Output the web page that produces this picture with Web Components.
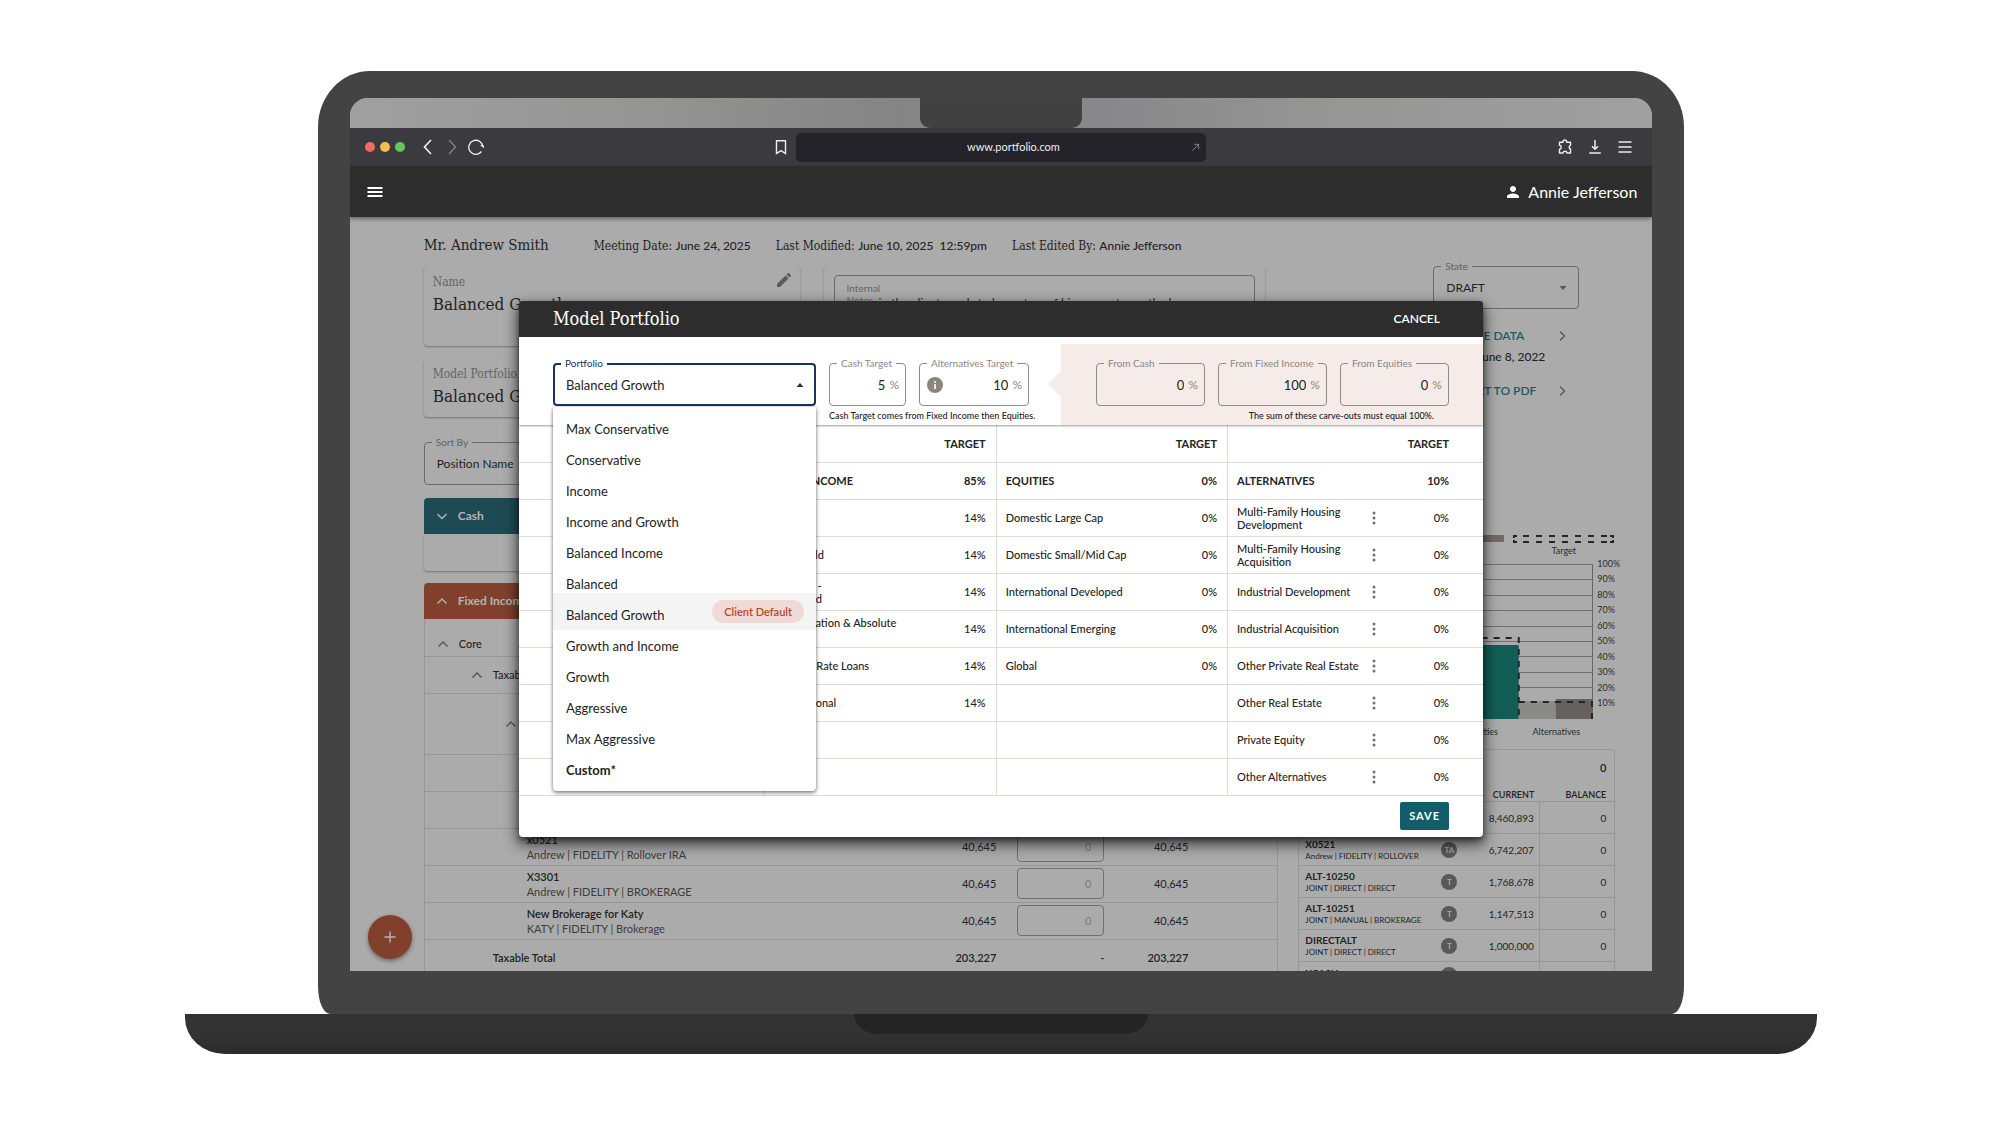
<!DOCTYPE html>
<html lang="en">
<head>
<meta charset="utf-8">
<title>Model Portfolio</title>
<style>
  :root {
    --slab: "DejaVu Serif Condensed", "Liberation Serif", serif;
    --ink: #232323;
    --muted: #666462;
    --line: #979695;
    --page: #ababab;
  }
  body { margin: 0; background: #fff; color: var(--ink); font: 12px/16px Lato, "Liberation Sans", sans-serif; }
</style>
</head>
<body>
<laptop-frame>
  <browser-bar></browser-bar>
  <app-header user="Annie Jefferson"></app-header>
  <plan-page></plan-page>
  <portfolio-modal slot="overlay"></portfolio-modal>
</laptop-frame>

<script>
const RESET = `:host,*,::before{box-sizing:border-box}button,input,select{font:inherit;color:inherit;background:none;border:0;padding:0;margin:0;border-radius:0;appearance:none;outline:0;min-width:0}button{display:flex;align-items:center;text-align:inherit}table{border-collapse:collapse;table-layout:fixed;width:100%}th,td{padding:0;text-align:left;font-weight:inherit}h1,h2,p,ul{margin:0;padding:0;font-weight:400;list-style:none}`;

function define(name, render) {
  customElements.define(name, class extends HTMLElement {
    connectedCallback() {
      if (this.shadowRoot) return;
      const t = document.createElement('template');
      t.innerHTML = `<style>${RESET}</style>` + render(this);
      this.attachShadow({ mode: 'open' }).append(t.content.cloneNode(true));
    }
  });
}

const ICONS = {
  back: ['0 0 16 16', '<path d="M11 1 4.500 8l6.500 7" fill="none" stroke="currentColor" stroke-width="1.700"/>'],
  forward: ['0 0 16 16', '<path d="M5 1l6.500 7L5 15" fill="none" stroke="currentColor" stroke-width="1.300"/>'],
  reload: ['0 0 16 16', '<path d="M13.400 12.500A7 7 0 1 1 14.800 8" fill="none" stroke="currentColor" stroke-width="1.300"/><path d="M12 6.200h3.800v3z" fill="currentColor"/>'],
  bookmark: ['0 0 16 16', '<path d="M3.500 1.700h9v12.800L8 11.600l-4.500 2.900z" fill="none" stroke="currentColor" stroke-width="1.400"/>'],
  open: ['0 0 10 10', '<path d="M1.500 8.500l7-7M3.500 1.500h5v5" fill="none" stroke="currentColor"/>'],
  puzzle: ['0 0 18 18', '<path d="M2.800 3.600h4c-.6-3.400 4.600-3.400 4 0h4.400v3.500c-2 .6-2 3.600 0 4.200v4.500h-4c-.2-2.700-4.200-2.700-4.400 0h-4v-4.300c2.600-.2 2.600-4.200 0-4.400z" fill="none" stroke="currentColor" stroke-width="1.600" stroke-linejoin="round"/>'],
  download: ['0 0 16 16', '<path d="M8 1v9M5 7.300l3 3 3-3M2.200 14h11.600" fill="none" stroke="currentColor" stroke-width="1.500"/>'],
  lines: ['0 0 16 16', '<path d="M1.500 3h13M1.500 8h13M1.500 13h13" stroke="currentColor" stroke-width="1.300"/>'],
  menu: ['0 0 16 16', '<path d="M.5 4h15M.5 8h15M.5 12h15" stroke="currentColor" stroke-width="1.900"/>'],
  person: ['4 4 16 16', '<path d="M12 12c2.210 0 4-1.790 4-4s-1.790-4-4-4-4 1.790-4 4 1.790 4 4 4zm0 2c-2.670 0-8 1.340-8 4v2h16v-2c0-2.660-5.330-4-8-4z" fill="currentColor"/>'],
  pencil: ['3 3 18 18', '<path d="M3 17.250V21h3.750L17.810 9.940l-3.750-3.750zM20.710 7.040a1 1 0 0 0 0-1.410l-2.340-2.340a1 1 0 0 0-1.410 0l-1.830 1.830 3.750 3.750z" fill="currentColor"/>'],
  up: ['0 0 12 12', '<path d="M1.500 8.500 6 4l4.500 4.500" fill="none" stroke="currentColor" stroke-width="1.400"/>'],
  down: ['0 0 12 12', '<path d="M1.500 4 6 8.500 10.500 4" fill="none" stroke="currentColor" stroke-width="1.400"/>'],
  right: ['0 0 12 12', '<path d="M4 1.500 8.500 6 4 10.500" fill="none" stroke="currentColor" stroke-width="1.300"/>'],
  caretDown: ['0 0 8 8', '<path d="M.5 2h7L4 6z" fill="currentColor"/>'],
  caretUp: ['0 0 8 8', '<path d="M.5 6h7L4 2z" fill="currentColor"/>'],
  info: ['0 0 16 16', '<circle cx="8" cy="8" r="8" fill="currentColor"/><path d="M8 7v5M8 4v1.700" stroke="#fff" stroke-width="1.600"/>'],
  dots: ['0 0 14 14', '<g fill="currentColor"><circle cx="7" cy="2" r="1.500"/><circle cx="7" cy="7" r="1.500"/><circle cx="7" cy="12" r="1.500"/></g>'],
  plus: ['0 0 12 12', '<path d="M6 .5v11M.5 6h11" stroke="currentColor" stroke-width="1.400"/>'],
};
define('app-icon', el => {
  const [box, art] = ICONS[el.getAttribute('name')];
  return `<style>:host{display:block;flex:none;width:var(--size,16px);height:var(--size,16px)}svg{display:block;width:100%;height:100%}</style>
  <svg viewBox="${box}" aria-hidden="true">${art}</svg>`;
});
const icon = (name, size = 16) => `<app-icon name="${name}" style="--size:${size}px"></app-icon>`;

/* Laptop body: lid, camera notch, clipped screen and base */
define('laptop-frame', () => `
<style>
  :host{display:flex;flex-direction:column;align-items:center;height:100vh;min-height:900px;padding:71px 0 71px 2px}
  .lid{width:68.4%;flex:1;min-height:0;background:#434343;border-radius:52px 52px 12px 12px / 56px 56px 28px 28px;padding:27px 32px 43px;display:flex}
  .screen{position:relative;flex:1;min-width:0;display:flex;flex-direction:column;overflow:hidden;border-radius:18px 18px 0 0;background:var(--page)}
  .strip{height:30px;flex:none;display:flex;justify-content:center;background:linear-gradient(90deg,#a0a0a1,#959594 22%,#848484 42%,#88888a 58%,#969695 76%,#a0a0a1)}
  .notch{width:162px;background:#414141;border-radius:0 0 10px 10px}
  .base{width:81.7%;height:40px;flex:none;display:flex;justify-content:center;background:linear-gradient(#333,#333 50%,#2b2b2b);border-radius:0 0 40px 40px / 0 0 36px 36px}
  .grip{width:294px;height:20px;background:#242424;border-radius:0 0 24px 24px / 0 0 20px 20px}
</style>
<div class="lid"><div class="screen"><div class="strip"><div class="notch"></div></div><slot></slot><slot name="overlay"></slot></div></div>
<div class="base"><div class="grip"></div></div>`);

define('browser-bar', () => `
<style>
  :host{display:grid;grid-template-columns:1fr 410px 1fr;align-items:center;height:38px;flex:none;background:#3b3a3f;color:#ededed;padding:0 15px}
  .side{display:flex;align-items:center}
  .lights{display:flex;gap:5px;margin-right:15px}
  i{width:10px;height:10px;border-radius:50%;background:#ee6b5f}i:nth-child(2){background:#f5bd4f}i:nth-child(3){background:#62c655}
  .nav{display:flex;gap:8px;flex:1}.nav button:nth-child(2){color:#858488}
  .mark{margin-right:7px}
  .tools{justify-content:flex-end;gap:14px;padding-right:4px}
  label{display:flex;align-items:center;height:29px;border-radius:5px;background:#242329;padding:0 6px 0 40px}
  input{flex:1;text-align:center;font-size:11px;line-height:16px}
  label app-icon{color:#8b8a8d}
</style>
<div class="side"><div class="lights"><i></i><i></i><i></i></div>
<div class="nav"><button aria-label="Back">${icon('back')}</button><button aria-label="Forward">${icon('forward')}</button><button aria-label="Reload">${icon('reload')}</button></div>
<button class="mark" aria-label="Bookmark">${icon('bookmark')}</button></div>
<label><input aria-label="Address" value="www.portfolio.com">${icon('open', 9)}</label>
<div class="side tools"><button aria-label="Extensions">${icon('puzzle')}</button><button aria-label="Downloads">${icon('download')}</button><button aria-label="Menu">${icon('lines')}</button></div>`);

define('app-header', el => `
<style>
  :host{display:flex;align-items:center;justify-content:space-between;height:51px;flex:none;background:#2d2d2d;color:#fff;padding:0 15px 0 17px;z-index:1;box-shadow:0 2px 4px #0006}
  div{display:flex;align-items:center;gap:9px;font-size:16px;line-height:20px}
</style>
<button aria-label="Open navigation">${icon('menu')}</button><div>${icon('person', 12)}<span>${el.getAttribute('user')}</span></div>`);

/* Text box or drop-down with its label set into the border */
let fieldId = 0;
define('outlined-field', el => {
  const a = n => el.getAttribute(n), id = 'f' + ++fieldId;
  const control = el.hasAttribute('select')
    ? `<select id="${id}"><option>${a('value')}</option></select>${icon(el.hasAttribute('open') ? 'caretUp' : 'caretDown', 8)}`
    : `${el.hasAttribute('info') ? `<span class="info">${icon('info')}</span>` : ''}<input id="${id}" value="${a('value')}"><span class="unit">%</span>`;
  return `
<style>
  :host{display:block;position:relative;--edge:#8e8b88;--fill:#fff}
  .box{display:flex;align-items:center;height:43px;border:1px solid var(--edge);border-radius:4px;padding:0 6px 0 7px;gap:4px;font-size:13px;line-height:18px}
  :host([select]) .box{padding:0 11px 0 12px}
  :host([open]) .box{border:2px solid #17355e;padding:0 10px 0 11px;color:var(--ink)}
  label{position:absolute;top:-7px;left:8px;padding:0 4px;background:var(--fill);color:var(--label,#8b8884);font-size:10px;line-height:14px;white-space:nowrap}
  :host([open]) label,:host([open]) app-icon{color:#17355e}
  :host([dim]){--edge:#6c6b6a;--fill:var(--page);--label:#63615f}
  :host([dim]) .box{font-size:12px}
  input,select{flex:1;width:0}input{text-align:right}
  .unit,.info{color:#8b8580}.unit{font-size:12px}
  :host([dim]) app-icon{color:#555}
</style>
<label for="${id}">${a('label')}</label><div class="box">${control}</div>`;
});

define('portfolio-menu', () => {
  const names = ['Max Conservative', 'Conservative', 'Income', 'Income and Growth', 'Balanced Income', 'Balanced', 'Balanced Growth', 'Growth and Income', 'Growth', 'Aggressive', 'Max Aggressive', 'Custom*'];
  return `
<style>
  :host{display:block;background:#fff;border-radius:0 0 4px 4px;padding:6px 0;box-shadow:0 2px 4px #0007,0 0 3px #0003}
  li{display:flex;align-items:center;justify-content:space-between;padding:0 12px 0 13px}
  button{height:31px;font-size:13px;line-height:18px}
  .on{background:#f4f4f4;margin-top:-6px;height:37px}.on button{align-self:flex-end}
  .chip{background:#efdad5;color:#b5482a;border-radius:12px;padding:0 12px;font-size:11px;line-height:23px;font-weight:600}
  li:last-child{font-weight:700}
</style>
<ul role="listbox" aria-label="Portfolio">${names.map(n => `<li role="option" class="${n === 'Balanced Growth' ? 'on' : ''}"><button>${n}</button>${n === 'Balanced Growth' ? '<span class="chip">Client Default</span>' : ''}</li>`).join('')}</ul>`;
});

define('target-table', () => {
  const fixed = ['Core', 'High Yield', 'Inflation -<br>Protected', 'Low Duration &amp; Absolute<br>Return', 'Floating Rate Loans', 'International', '', ''];
  const eq = ['Domestic Large Cap', 'Domestic Small/Mid Cap', 'International Developed', 'International Emerging', 'Global', '', '', ''];
  const alt = ['Multi-Family Housing Development', 'Multi-Family Housing Acquisition', 'Industrial Development', 'Industrial Acquisition', 'Other Private Real Estate', 'Other Real Estate', 'Private Equity', 'Other Alternatives'];
  const pair = (n, v) => `<td class="n">${n}</td><td class="v">${n ? v : ''}</td>`;
  return `
<style>
  :host{display:block;font-size:11px;line-height:13px;font-weight:500}
  tr{height:37px;border-bottom:1px solid #dedbd7}
  .n{padding-left:9px;border-left:1px solid #dedbd7}
  .wrap{padding-right:20px}
  .n:first-child{border:0}
  .v{text-align:right;padding-right:10px}
  .last{padding-right:34px}
  thead,tbody tr:first-child{font-weight:700}
  .m{color:#77716d}
</style>
<table><colgroup><col style="width:25.500%"><col style="width:18%"><col style="width:6%"><col style="width:18%"><col style="width:6%"><col style="width:14.500%"><col style="width:2%"><col style="width:10%"></colgroup>
<thead><tr><td class="n"></td><td class="n"></td><td class="v">TARGET</td><td class="n"></td><td class="v">TARGET</td><td class="n"></td><td></td><td class="v last">TARGET</td></tr></thead>
<tbody><tr><td class="n"></td>${pair('FIXED INCOME', '85%')}${pair('EQUITIES', '0%')}<td class="n">ALTERNATIVES</td><td></td><td class="v last">10%</td></tr>
${alt.map((n, i) => `<tr><td class="n"></td>${pair(fixed[i], '14%')}${pair(eq[i], '0%')}<td class="n${i < 2 ? ' wrap' : ''}">${n}</td><td class="m"><button aria-label="${n} options">${icon('dots', 14)}</button></td><td class="v last">0%</td></tr>`).join('')}</tbody></table>`;
});

define('portfolio-modal', () => `
<style>
  :host{position:absolute;top:203px;left:13%;right:13%;background:#fff;border-radius:4px;box-shadow:0 6px 14px 2px #0009,0 3px 5px #0006;display:block}
  header{display:flex;align-items:center;justify-content:space-between;height:36px;background:#2d2d2d;color:#fff;border-radius:3px 3px 0 0;padding:0 43px 0 34px}
  h2{font:18px/24px var(--slab)}
  header button{font-size:12px;font-weight:600}
  .bar{display:flex;height:88px;position:relative;z-index:1;padding:7px 0 0 34px;box-shadow:0 1px 2px #0006}
  .pick{width:263px;flex:none;padding-top:19px;margin-right:13px;position:relative}
  portfolio-menu{position:absolute;top:63px;left:0;right:0}
  .targets{flex:1;min-width:0;padding-top:19px}
  .row{display:flex;gap:13px}
  .cash{width:77px}.alt{width:110px}
  p{font-size:9px;line-height:14px;padding-top:3px;white-space:nowrap;font-weight:500}
  .carve{width:422px;flex:none;background:#f5ebe8;padding:19px 34px 0 35px;position:relative}
  .carve::before{content:"";position:absolute;left:-13px;top:27px;border:13px solid transparent;border-right-color:#f5ebe8;border-left:0}
  .carve outlined-field{flex:1;--fill:#f5ebe8}
  .carve p{text-align:right;padding-right:15px}
  footer{display:flex;justify-content:flex-end;align-items:center;height:41px;padding-right:34px}
  footer button{background:#125d69;color:#fff;border-radius:2px;height:28px;padding:0 9px;font-size:11px;font-weight:700;letter-spacing:1px}
</style>
<header><h2>Model Portfolio</h2><button>CANCEL</button></header>
<div class="bar">
  <div class="pick"><outlined-field select open label="Portfolio" value="Balanced Growth"></outlined-field><portfolio-menu></portfolio-menu></div>
  <div class="targets"><div class="row"><outlined-field class="cash" label="Cash Target" value="5"></outlined-field><outlined-field class="alt" info label="Alternatives Target" value="10"></outlined-field></div><p>Cash Target comes from Fixed Income then Equities.</p></div>
  <div class="carve"><div class="row"><outlined-field label="From Cash" value="0"></outlined-field><outlined-field label="From Fixed Income" value="100"></outlined-field><outlined-field label="From Equities" value="0"></outlined-field></div><p>The sum of these carve-outs must equal 100%.</p></div>
</div>
<target-table></target-table>
<footer><button>SAVE</button></footer>`);

define('section-bar', el => `
<style>
  :host{display:block}
  button{width:100%;height:36px;background:var(--tone);color:#b4b4b4;border-radius:4px 4px 0 0;padding-left:12px;gap:10px;font-size:12px;font-weight:700}
</style><button>${icon(el.getAttribute('arrow'), 12)}<slot></slot></button>`);

define('holdings-table', () => {
  const rows = [['x0521', 'Andrew | FIDELITY | Rollover IRA'], ['X3301', 'Andrew | FIDELITY | BROKERAGE'], ['New Brokerage for Katy', 'KATY | FIDELITY | Brokerage']];
  const group = (name, pad, h, top = 0) => `<tr style="height:${h}px"><td colspan="5"><button class="g" style="padding:${top}px 0 0 ${pad}px">${icon('up', 12)}${name}</button></td></tr>`;
  return `
<style>
  :host{display:block;border:solid var(--line);border-width:0 1px;font-size:11px}
  tr{height:37px;border-bottom:1px solid var(--line)}
  .g{gap:10px;font-weight:500;line-height:14px}.g app-icon{color:#555}
  .name{padding-left:102px;line-height:15px}.name span{display:block;color:#3c3c3c}
  b{font-weight:600}
  .v{text-align:right}
  .v input{width:87px;height:31px;border:1px solid #71706f;border-radius:4px;text-align:right;padding-right:12px;color:#7c7a78;display:inline-block;vertical-align:middle}
  .total{font-weight:600}.total td:first-child{padding-left:68px}
</style>
<table><colgroup><col><col style="width:110px"><col style="width:108px"><col style="width:84px"><col style="width:89px"></colgroup><tbody>
${group('Core', 12, 37, 14)}${group('Taxable', 46, 37)}${group('', 80, 61)}
<tr><td colspan="5"></td></tr><tr><td colspan="5"></td></tr>
${rows.map(([a, b]) => `<tr><td class="name"><b>${a}</b><span>${b}</span></td><td class="v">40,645</td><td class="v"><input aria-label="${a} change" value="0"></td><td class="v">40,645</td><td></td></tr>`).join('')}
<tr class="total"><td>Taxable Total</td><td class="v">203,227</td><td class="v">-</td><td class="v">203,227</td><td></td></tr>
</tbody></table>`;
});

define('allocation-chart', () => `
<style>
  :host{display:block;font-size:9px;line-height:12px;color:#2b2b2b}
  .legend{display:flex;justify-content:flex-end;gap:9px;padding-right:1px}
  .legend div{width:101px;text-align:center}
  .swatch{height:7px;background:#6f6a66;margin-bottom:3px}
  .legend svg{width:100%;height:8px;margin-bottom:2px}
  .plot{display:flex;margin-top:7px}
  .plot svg{flex:1;min-width:0;height:155px}
  ul{width:22px;padding-left:4px;margin-top:-8px;display:flex;flex-direction:column;justify-content:space-between;height:154px}li{line-height:15px}
  .names{display:flex;justify-content:flex-end;padding-right:22px;margin-top:7px}.names span{width:74px;text-align:center}
  svg{display:block}
</style>
<div class="legend"><div><div class="swatch"></div></div><div><svg viewBox="0 0 101 8"><path d="M4 1H1v2M1 5v2h3M97 1h3v2M100 5v2h-3M10 1h84M10 7h84" fill="none" stroke="#262626" stroke-width="2" stroke-dasharray="6 7"/></svg>Target</div></div>
<div class="plot"><svg viewBox="0 0 294 155" preserveAspectRatio="none">
${Array.from({ length: 10 }, (_, i) => `<path d="M0 ${Math.round(i * 15.4) + .5}h294" stroke="#707070" stroke-width="1"/>`).join('')}
<path d="M293.500 0v155" stroke="#666"/>
<path d="M147 81h73v74h-73z" fill="#125e57"/><path d="M220 137h37v18h-37z" fill="#8b8a84"/><path d="M257 135h37v20h-37z" fill="#66615e"/>
<path d="M147 74h73v81M220 138h73v17" fill="none" stroke="#242424" stroke-width="2" stroke-dasharray="6 6"/></svg>
<ul>${[100, 90, 80, 70, 60, 50, 40, 30, 20, 10].map(n => `<li>${n}%</li>`).join('')}</ul></div>
<div class="names"><span>Equities</span><span>Alternatives</span></div>`);

define('accounts-table', () => {
  const rows = [['X0520', 'Andrew | FIDELITY | IRA', 'TA', '8,460,893'], ['X0521', 'Andrew | FIDELITY | ROLLOVER', 'TA', '6,742,207'], ['ALT-10250', 'JOINT | DIRECT | DIRECT', 'T', '1,768,678'], ['ALT-10251', 'JOINT | MANUAL | BROKERAGE', 'T', '1,147,513'], ['DIRECTALT', 'JOINT | DIRECT | DIRECT', 'T', '1,000,000']];
  return `
<style>
  :host{display:block;border:1px solid var(--line);border-radius:4px 4px 0 0}
  .sum{height:36px;text-align:right;padding-right:8px;font-size:11px;line-height:36px;font-weight:600}
  thead tr{height:15px}tbody tr{height:32px;border-top:1px solid var(--line)}
  td,th{text-align:right;font-size:10px;padding-right:5px}
  th{font-size:9px;line-height:12px;font-weight:600;padding-top:3px}
  td:first-child{text-align:left;padding-left:6px;line-height:12px}
  td span{display:block;font-size:8px;line-height:12px;white-space:nowrap}
  td:last-child{border-left:1px solid var(--line)}td:last-child,th:last-child{padding-right:8px}
  td b{font-weight:700}
  i{display:block;width:16px;height:16px;border-radius:50%;background:#5c5855;color:#aaa;font:700 8px/16px Lato,sans-serif;text-align:center}
  .next td{vertical-align:top;padding-top:5px}
</style>
<div class="sum">0</div>
<table><colgroup><col><col style="width:22px"><col style="width:76px"><col style="width:75px"></colgroup>
<thead><tr><th></th><th></th><th>CURRENT</th><th>BALANCE</th></tr></thead>
<tbody>${rows.map(r => `<tr><td><b>${r[0]}</b><span>${r[1]}</span></td><td><i>${r[2]}</i></td><td>${r[3]}</td><td>0</td></tr>`).join('')}
<tr class="next"><td><b>XCASH</b></td><td><i></i></td><td></td><td></td></tr></tbody></table>`;
});

define('plan-page', () => `
<style>
  :host{display:flex;flex-direction:column;flex:1;min-height:0;overflow:hidden;background:var(--page);padding:19px 37px 0 74px}
  .meta{display:flex;align-items:baseline;height:30px;flex:none;font:12px/18px var(--slab)}
  h1{font:15px/18px var(--slab);width:170px}
  .meta p{margin-right:25px;white-space:nowrap}.meta b{font:500 12px/18px Lato,sans-serif}
  .cols{display:flex;gap:20px}
  .main{flex:1;min-width:0}.aside{width:317px;flex:none}
  .cards{display:grid;grid-template-columns:377fr 443fr;gap:24px;padding-right:13px}
  .note{padding:9px 10px}
  .card{border-radius:4px;box-shadow:0 1px 2px #0005}
  .c1{height:80px;padding:7px 9px;display:flex;justify-content:space-between;align-items:flex-start}
  .c2{height:58px;margin-top:13px;padding:6px 9px}
  .cap{font:12px/18px var(--slab);color:var(--muted)}
  .big{font:17px/26px var(--slab)}
  .note div{border:1px solid #6c6b6a;border-radius:4px;height:60px;padding:6px 12px;font-size:10px;line-height:12px;color:var(--muted)}
  .note span{display:block}.note p{color:var(--ink);font-size:12px;line-height:14px;margin-top:-10px;padding-left:32px}
  .sort{margin-top:25px;width:377px}
  section-bar{margin-top:12px}.blank{height:37px;border-radius:0 0 4px 4px}
  .sort+section-bar{margin-top:13px}
  .pen{color:#5d5956}
  .state{width:146px;margin-left:135px}
  .acts{width:148px;margin-left:122px;padding-top:18px;color:#1f5a63;font-weight:600}
  .acts button{width:100%;height:18px;justify-content:flex-end;font-size:12px}
  .acts app-icon{color:#555}
  .acts .a app-icon{margin-left:32px}.acts .b app-icon{margin-left:20px}
  .acts p{color:var(--ink);text-align:right;line-height:16px;padding:4px 23px 17px 0;font-size:12px;font-weight:500}
  allocation-chart{margin-top:135px}accounts-table{margin-top:11px}
  .fab{position:absolute;left:18px;bottom:12px;width:44px;height:44px;border-radius:50%;background:#80402c;color:#b9b3b0;justify-content:center;box-shadow:0 2px 4px #0006}
</style>
<div class="meta"><h1>Mr. Andrew Smith</h1><p>Meeting Date: <b>June 24, 2025</b></p><p>Last Modified: <b>June 10, 2025&nbsp; 12:59pm</b></p><p>Last Edited By: <b>Annie Jefferson</b></p></div>
<div class="cols">
  <div class="main">
    <div class="cards">
      <div>
        <div class="card c1"><div><div class="cap">Name</div><div class="big">Balanced Growth xx</div></div><button class="pen" aria-label="Edit name">${icon('pencil', 14)}</button></div>
        <div class="card c2"><div class="cap">Model Portfolio</div><div class="big">Balanced Growth</div></div>
      </div>
      <div class="card note"><div><span>Internal<br>Notes</span><p>in the client needs to know two of his accounts are the love</p></div></div>
    </div>
    <outlined-field class="sort" dim select label="Sort By" value="Position Name"></outlined-field>
    <section-bar arrow="down" style="--tone:#1e4b53">Cash</section-bar><div class="card blank"></div>
    <section-bar arrow="up" style="--tone:#80402c">Fixed Income</section-bar>
    <holdings-table></holdings-table>
  </div>
  <div class="aside">
    <outlined-field class="state" dim select label="State" value="DRAFT"></outlined-field>
    <div class="acts"><button class="a">UPDATE DATA${icon('right', 12)}</button><p>June 8, 2022</p><button class="b">EXPORT TO PDF${icon('right', 12)}</button></div>
    <allocation-chart></allocation-chart>
    <accounts-table></accounts-table>
  </div>
</div>
<button class="fab" aria-label="Add">${icon('plus', 12)}</button>`);
</script>
</body>
</html>
